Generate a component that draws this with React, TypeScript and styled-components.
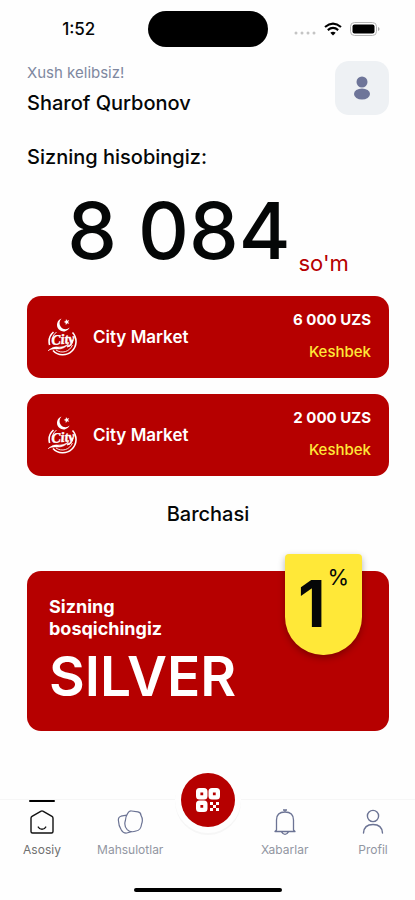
import React from "react";
import styled, { createGlobalStyle } from "styled-components";

const red = "#b60000";
const yellow = "#ffe838";
const slate = "#6b7394";

const GlobalStyle = createGlobalStyle`
  *, *::before, *::after { box-sizing: border-box; }
  html, body, #root { height: 100%; }
  body {
    margin: 0;
    background: #fefefe;
    color: #050707;
    font-family: Inter, "Liberation Sans", sans-serif;
  }
  h1, h2, p { margin: 0; font-weight: 500; }
  button { font-family: inherit; border: 0; padding: 0; cursor: pointer; }
`;

const Screen = styled.div`
  display: flex;
  flex-direction: column;
  min-height: 100%;
`;

const StatusBar = styled.div`
  display: grid;
  grid-template-columns: 1fr 120px 1fr;
  align-items: center;
  padding-top: 11px;
`;

const Clock = styled.time`
  padding-left: 10px;
  text-align: center;
  font-size: 17px;
  line-height: 36px;
  font-weight: 500;
`;

const Island = styled.div`
  height: 36px;
  border-radius: 18px;
  background: #000;
`;

const Signals = styled.div`
  display: flex;
  align-items: center;
  gap: 8px;
  padding-left: 26px;
`;

const Content = styled.main`
  flex: 1;
  display: flex;
  flex-direction: column;
  padding: 14px 26px 0 27px;
`;

const Header = styled.header`
  display: flex;
  justify-content: space-between;
`;

const Greeting = styled.p`
  padding-top: 2px;
  font-size: 15px;
  line-height: 20px;
  font-weight: 400;
  color: #7f88a0;
`;

const Name = styled.h1`
  padding-top: 6px;
  font-size: 20px;
  line-height: 28px;
`;

const AvatarButton = styled.button`
  display: grid;
  place-items: center;
  width: 54px;
  height: 54px;
  border-radius: 14px;
  background: #eef1f4;
`;

const AccountTitle = styled.h2`
  margin-top: 26px;
  font-size: 20px;
  line-height: 28px;
`;

const Balance = styled.div`
  display: flex;
  align-items: flex-end;
  justify-content: center;
  gap: 8px;
  height: 110px;
  margin-top: 4px;
  padding-bottom: 8px;
`;

const Amount = styled.strong`
  font-size: 79px;
  line-height: 94px;
  font-weight: 500;
`;

const Currency = styled.span`
  font-size: 22px;
  line-height: 28px;
  color: ${red};
`;

const Stores = styled.div`
  display: flex;
  flex-direction: column;
  gap: 16px;
  margin-top: 11px;
`;

const Store = styled.button`
  display: flex;
  align-items: center;
  height: 82px;
  padding: 0 18px 0 20px;
  border-radius: 14px;
  background: ${red};
  color: #fff;
  text-align: left;
`;

const StoreName = styled.span`
  flex: 1;
  padding-left: 14px;
  font-size: 17px;
  line-height: 24px;
  font-weight: 600;
`;

const Reward = styled.span`
  display: flex;
  flex-direction: column;
  gap: 12px;
  padding-bottom: 2px;
  text-align: right;
  font-size: 15px;
  line-height: 20px;
  font-weight: 700;
`;

const RewardKind = styled.span`
  font-weight: 500;
  color: ${yellow};
`;

const AllButton = styled.button`
  align-self: center;
  margin-top: 24px;
  background: none;
  color: inherit;
  font-size: 20px;
  line-height: 28px;
  font-weight: 500;
`;

const Level = styled.section`
  position: relative;
  height: 160px;
  margin-top: 43px;
  padding: 25px 22px 0;
  border-radius: 14px;
  background: ${red};
  color: #fff;
`;

const LevelLabel = styled.p`
  width: 130px;
  font-size: 18px;
  line-height: 22px;
  font-weight: 700;
`;

const LevelName = styled.p`
  margin-top: 4px;
  font-size: 55px;
  line-height: 64px;
  font-weight: 600;
`;

const Badge = styled.div`
  position: absolute;
  top: -17px;
  right: 27px;
  display: flex;
  justify-content: center;
  gap: 2px;
  width: 77px;
  height: 101px;
  padding-top: 12px;
  border-radius: 4px 4px 38px 38px;
  background: ${yellow};
  color: #050707;
  box-shadow: 0 3px 7px rgba(0, 0, 0, 0.3);
`;

const Percent = styled.span`
  padding-top: 12px;
  font-size: 64px;
  line-height: 52px;
  font-weight: 700;
`;

const PercentSign = styled.span`
  font-size: 22px;
  line-height: 22px;
`;

const Nav = styled.nav`
  position: relative;
  display: grid;
  grid-template-columns: 84px 1fr 62px 1fr 84px;
  height: 101px;
  border-top: 1px solid #f6f6f6;
`;

const Tab = styled.button<{ $active?: boolean }>`
  position: relative;
  display: flex;
  flex-direction: column;
  align-items: center;
  align-self: start;
  gap: 6px;
  padding-top: 8px;
  background: none;
  color: ${(p) => (p.$active ? "#111" : slate)};
  font-size: 12px;
  line-height: 16px;

  &::before {
    content: "";
    position: absolute;
    top: 0;
    width: 26px;
    height: 2px;
    border-radius: 1px;
    background: ${(p) => (p.$active ? "#000" : "transparent")};
  }
`;

const TabLabel = styled.span<{ $active?: boolean }>`
  color: ${(p) => (p.$active ? "#707070" : "#9296a2")};
`;

const Scan = styled.button`
  position: absolute;
  top: -27px;
  left: 50%;
  display: grid;
  place-items: center;
  width: 54px;
  height: 54px;
  border-radius: 50%;
  transform: translateX(-50%);
  background: ${red};
  box-shadow: 0 0 0 6px #fefefe, 0 2px 0 6px #f6f6f6;
`;

const HomeIndicator = styled.div`
  position: absolute;
  bottom: 8px;
  left: 50%;
  width: 148px;
  height: 4px;
  border-radius: 2px;
  transform: translateX(-50%);
  background: #000;
`;

const CellDots = () => (
  <svg width="22" height="14" viewBox="0 0 22 14" fill="#c4c4c4" aria-hidden="true">
    <circle cx="2" cy="11" r="1.5" />
    <circle cx="8" cy="11" r="1.5" />
    <circle cx="14" cy="11" r="1.5" />
    <circle cx="20" cy="11" r="1.5" />
  </svg>
);

const Wifi = () => (
  <svg width="18" height="14" viewBox="0 0 18 14" fill="none" stroke="#000" strokeWidth="2.1" aria-hidden="true">
    <path d="M1 5Q9-1.8 17 5" />
    <path d="M3.8 8.1Q9 3.8 14.2 8.1" />
    <path d="M6.3 10.8Q9 8.5 11.7 10.8L9 13.4Z" fill="#000" stroke="none" />
  </svg>
);

const Battery = () => (
  <svg width="31" height="14" viewBox="0 0 31 14" aria-hidden="true">
    <rect x="0.5" y="0.5" width="26" height="13" rx="4" fill="none" stroke="#b5b5b5" />
    <rect x="2.5" y="2.5" width="22" height="9" rx="2" />
    <path d="M28 5v4q1.6-.6 1.6-2T28 5Z" fill="#aaa" />
  </svg>
);

const Person = () => (
  <svg width="18" height="24" viewBox="0 0 18 24" fill="#6e7599" aria-hidden="true">
    <circle cx="9" cy="6" r="5.5" />
    <ellipse cx="9" cy="18" rx="8" ry="5.5" />
  </svg>
);

const CityLogo = () => (
  <svg width="32" height="40" viewBox="0 0 32 40" fill="none" stroke="#fff" aria-hidden="true">
    <path d="M14.5 1.6A6.6 6.6 0 1 0 22.6 10.6A5.7 5.7 0 1 1 14.5 1.6Z" fill="#fff" stroke="none" />
    <path d="M19 2l1.2 1.7 2-.6-1.1 1.8 1.2 1.8-2.1-.4-1.4 1.6-.2-2.1-1.9-.9 2-.8Z" fill="#fff" stroke="none" />
    <path d="M6.5 15A13 13 0 0 0 2.6 28M6 33.5A13.2 13.2 0 1 0 25.5 15.5" strokeWidth="1.6" />
    <path d="M9.5 15A10.8 10.8 0 0 0 5.2 22M9 33A10.8 10.8 0 0 0 25.4 28" strokeWidth="0.9" />
    <text x="4.5" y="27" fill="#fff" stroke="#fff" strokeWidth="0.4" fontFamily="Liberation Serif, serif" fontStyle="italic" fontWeight="700" fontSize="14" transform="rotate(-5 15 24)">City</text>
    <path d="M1 33.8Q6 29 11 30T21.5 27Q17 32.5 10 32T1 33.8Z" fill="#fff" strokeWidth="0.5" />
    <path d="M26 23Q25 29 20 30" strokeWidth="1.2" />
  </svg>
);

const HomeIcon = () => (
  <svg width="28" height="28" viewBox="0 0 28 28" fill="none" stroke="currentColor" strokeWidth="1.4" strokeLinecap="round" strokeLinejoin="round" aria-hidden="true">
    <path d="M3 10.2Q3 9 4 8.4L12.7 3.3Q14 2.5 15.3 3.3L24 8.4Q25 9 25 10.2V23.5Q25 25 23.5 25H4.5Q3 25 3 23.5Z" />
    <path d="M10.2 19Q11.4 21.3 14 21.3T17.8 19" />
  </svg>
);

const ProductsIcon = () => (
  <svg width="28" height="28" viewBox="0 0 28 28" fill="none" stroke="currentColor" strokeWidth="1.2" strokeLinejoin="round" aria-hidden="true">
    <path d="M11.8 5.2Q13 2.7 15.5 3L22 3.9Q24.8 4.4 25 7.4Q27.4 11.5 25.6 16Q24.8 22.5 20 23Q14.5 25 11.2 21.6Q7.6 17.5 9.4 12.5Q9.8 8 11.8 5.2Z" />
    <path d="M10.7 7.2L5 8.2Q2 9.2 2.4 12.5Q2.6 18 5.3 22Q7.2 25.4 10.8 25L15.5 23.7" />
  </svg>
);

const BellIcon = () => (
  <svg width="28" height="28" viewBox="0 0 28 28" fill="none" stroke="currentColor" strokeWidth="1.3" strokeLinejoin="round" aria-hidden="true">
    <path d="M5.5 22V12Q5.5 4 14 4T22.5 12V22L24 23.5H4L5.5 22ZM12 2H16M14 2V4M10.5 23.8Q14 29 17.5 23.8" />
  </svg>
);

const ProfileIcon = () => (
  <svg width="28" height="28" viewBox="0 0 28 28" fill="none" stroke="currentColor" strokeWidth="1.4" strokeLinecap="round" aria-hidden="true">
    <circle cx="14" cy="8" r="5.6" />
    <path d="M4.5 25Q5 16.5 14 16.5T23.5 25" />
  </svg>
);

const QrIcon = () => (
  <svg width="24" height="24" viewBox="0 0 24 24" aria-hidden="true">
    <path
      fill="#fff"
      fillRule="evenodd"
      d="M3.5 0h4.5a3.5 3.5 0 0 1 3.5 3.5v4.5a3.5 3.5 0 0 1-3.5 3.5h-4.5a3.5 3.5 0 0 1-3.5-3.5v-4.5a3.5 3.5 0 0 1 3.5-3.5ZM4.4 4.4v2.8h2.8v-2.8ZM16 0h4.5a3.5 3.5 0 0 1 3.5 3.5v4.5a3.5 3.5 0 0 1-3.5 3.5h-4.5a3.5 3.5 0 0 1-3.5-3.5v-4.5a3.5 3.5 0 0 1 3.5-3.5ZM16.9 4.4v2.8h2.8v-2.8ZM3.5 12.5h4.5a3.5 3.5 0 0 1 3.5 3.5v4.5a3.5 3.5 0 0 1-3.5 3.5h-4.5a3.5 3.5 0 0 1-3.5-3.5v-4.5a3.5 3.5 0 0 1 3.5-3.5ZM4.4 16.9v2.8h2.8v-2.8Z"
    />
    <path d="M14 14h3v3h3v-3h3v3h-3v3h3v3h-3v-3h-3v3h-3v-3h3v-3h-3Z" fill="#fff" />
  </svg>
);

const stores = [
  { name: "City Market", amount: "6 000 UZS" },
  { name: "City Market", amount: "2 000 UZS" },
];

export default function App() {
  return (
    <Screen>
      <GlobalStyle />
      <StatusBar>
        <Clock>1:52</Clock>
        <Island />
        <Signals>
          <CellDots />
          <Wifi />
          <Battery />
        </Signals>
      </StatusBar>

      <Content>
        <Header>
          <div>
            <Greeting>Xush kelibsiz!</Greeting>
            <Name>Sharof Qurbonov</Name>
          </div>
          <AvatarButton aria-label="Profil">
            <Person />
          </AvatarButton>
        </Header>

        <AccountTitle>Sizning hisobingiz:</AccountTitle>
        <Balance>
          <Amount>8 084</Amount>
          <Currency>so'm</Currency>
        </Balance>

        <Stores>
          {stores.map((store) => (
            <Store key={store.amount}>
              <CityLogo />
              <StoreName>{store.name}</StoreName>
              <Reward>
                {store.amount}
                <RewardKind>Keshbek</RewardKind>
              </Reward>
            </Store>
          ))}
        </Stores>
        <AllButton>Barchasi</AllButton>

        <Level>
          <LevelLabel>Sizning bosqichingiz</LevelLabel>
          <LevelName>SILVER</LevelName>
          <Badge>
            <Percent>1</Percent>
            <PercentSign>%</PercentSign>
          </Badge>
        </Level>
      </Content>

      <Nav>
        <Tab $active aria-current="page">
          <HomeIcon />
          <TabLabel $active>Asosiy</TabLabel>
        </Tab>
        <Tab>
          <ProductsIcon />
          <TabLabel>Mahsulotlar</TabLabel>
        </Tab>
        <span />
        <Tab>
          <BellIcon />
          <TabLabel>Xabarlar</TabLabel>
        </Tab>
        <Tab>
          <ProfileIcon />
          <TabLabel>Profil</TabLabel>
        </Tab>
        <Scan aria-label="QR">
          <QrIcon />
        </Scan>
        <HomeIndicator />
      </Nav>
    </Screen>
  );
}
